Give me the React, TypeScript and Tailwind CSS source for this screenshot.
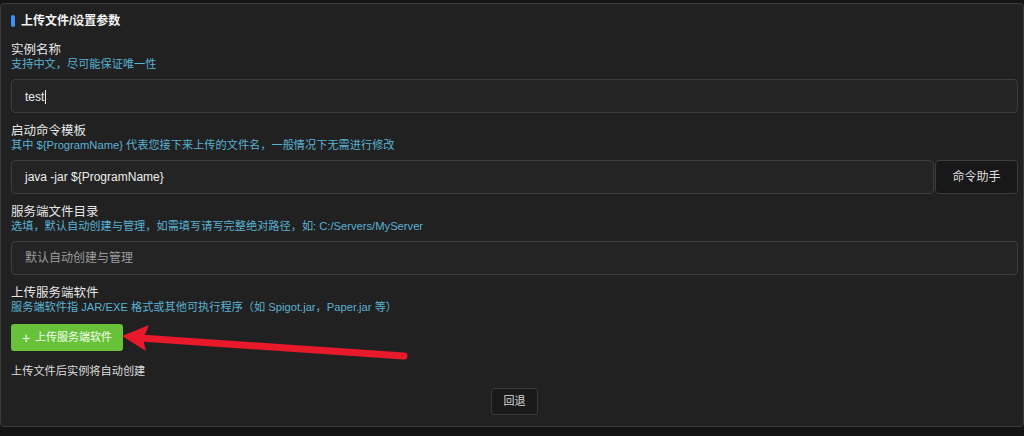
import React from "react";

const font = {
  fontFamily: '"Liberation Sans", Arial, "Noto Sans CJK SC", sans-serif',
};

function Field({
  label,
  hint,
  gap = 8,
  children,
}: {
  label: string;
  hint: React.ReactNode;
  gap?: number;
  children: React.ReactNode;
}) {
  return (
    <div className="flex flex-col">
      <div className="relative top-[2px] text-[12.5px] leading-[15px] text-[#e6e6e6]">{label}</div>
      <div className="relative top-[1px] text-[11.2px] leading-[15px] text-[#5ab2d4]">{hint}</div>
      <div className={gap === 10 ? "mt-[10px]" : "mt-[8px]"}>{children}</div>
    </div>
  );
}

function TextInput({ value, placeholder }: { value?: string; placeholder?: string }) {
  return (
    <div className="flex h-[34px] flex-1 items-center rounded-[4px] border border-[#3d3d3d] bg-[#242424] px-[13px] text-[12px]">
      {value ? (
        <span className="text-[#eeeeee]">
          {value}
          {value === "test" && <span className="ml-[1px] inline-block h-[14px] w-px translate-y-[3px] bg-[#eeeeee]" />}
        </span>
      ) : (
        <span className="text-[#9c9c9c]">{placeholder}</span>
      )}
    </div>
  );
}

export default function App() {
  return (
    <div className="relative h-[436px] w-[1024px] overflow-hidden bg-[#141414] pt-[3px]" style={font}>
      <div className="flex h-[424px] flex-col rounded-[4px] border border-[#3b3b3b] bg-[#212121] pl-[10px] pr-[5px]">
        <div className="mt-[10px] flex h-[14px] items-center gap-[6px]">
          <span className="h-[12px] w-[4px] rounded-[2px] bg-[#3b8ff5]" />
          <span className="text-[12px] font-bold text-[#f2f2f2]">上传文件/设置参数</span>
        </div>

        <div className="mt-[13px] flex flex-col gap-[9px]">
          <Field label="实例名称" hint="支持中文，尽可能保证唯一性">
            <div className="flex">
              <TextInput value="test" />
            </div>
          </Field>

          <Field label="启动命令模板" hint="其中 ${ProgramName} 代表您接下来上传的文件名，一般情况下无需进行修改">
            <div className="flex gap-px">
              <TextInput value="java -jar ${ProgramName}" />
              <button className="h-[34px] w-[83px] rounded-[4px] border border-[#3d3d3d] bg-[#181818] text-[12px] text-[#dddddd]">
                命令助手
              </button>
            </div>
          </Field>

          <Field label="服务端文件目录" hint="选填，默认自动创建与管理，如需填写请写完整绝对路径，如: C:/Servers/MyServer">
            <div className="flex">
              <TextInput placeholder="默认自动创建与管理" />
            </div>
          </Field>

          <Field label="上传服务端软件" hint="服务端软件指 JAR/EXE 格式或其他可执行程序（如 Spigot.jar，Paper.jar 等）" gap={10}>
            <button className="flex h-[27px] w-[112px] items-center justify-center gap-[5px] rounded-[3px] bg-[#67c23a] text-[11px] text-[#f4fff0]">
              <span className="text-[14px] font-light leading-none">+</span>
              上传服务端软件
            </button>
          </Field>
        </div>

        <div className="mt-[12px] text-[11.2px] leading-[16px] text-[#dddddd]">上传文件后实例将自动创建</div>

        <div className="mt-[9px] flex justify-center">
          <button className="h-[27px] w-[47px] rounded-[3px] border border-[#3a3a3a] bg-[#1a1a1a] text-[11px] text-[#d8d8d8]">
            回退
          </button>
        </div>
      </div>

      <svg className="pointer-events-none absolute left-0 top-0" width="1024" height="436">
        <line x1="140" y1="338" x2="404" y2="356" stroke="#e8192b" strokeWidth="7" strokeLinecap="round" />
        <polygon points="122,336 149,325 143,339 146,351" fill="#e8192b" />
      </svg>
    </div>
  );
}
